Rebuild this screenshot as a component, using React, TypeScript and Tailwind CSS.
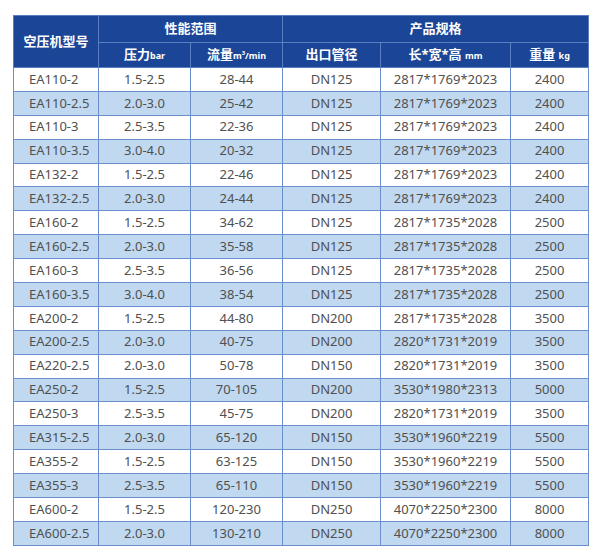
const rows = [
["EA110-2","1.5-2.5","28-44","DN125","2817*1769*2023","2400"],
["EA110-2.5","2.0-3.0","25-42","DN125","2817*1769*2023","2400"],
["EA110-3","2.5-3.5","22-36","DN125","2817*1769*2023","2400"],
["EA110-3.5","3.0-4.0","20-32","DN125","2817*1769*2023","2400"],
["EA132-2","1.5-2.5","22-46","DN125","2817*1769*2023","2400"],
["EA132-2.5","2.0-3.0","24-44","DN125","2817*1769*2023","2400"],
["EA160-2","1.5-2.5","34-62","DN125","2817*1735*2028","2500"],
["EA160-2.5","2.0-3.0","35-58","DN125","2817*1735*2028","2500"],
["EA160-3","2.5-3.5","36-56","DN125","2817*1735*2028","2500"],
["EA160-3.5","3.0-4.0","38-54","DN125","2817*1735*2028","2500"],
["EA200-2","1.5-2.5","44-80","DN200","2817*1735*2028","3500"],
["EA200-2.5","2.0-3.0","40-75","DN200","2820*1731*2019","3500"],
["EA220-2.5","2.0-3.0","50-78","DN150","2820*1731*2019","3500"],
["EA250-2","1.5-2.5","70-105","DN200","3530*1980*2313","5000"],
["EA250-3","2.5-3.5","45-75","DN200","2820*1731*2019","3500"],
["EA315-2.5","2.0-3.0","65-120","DN150","3530*1960*2219","5500"],
["EA355-2","1.5-2.5","63-125","DN150","3530*1960*2219","5500"],
["EA355-3","2.5-3.5","65-110","DN150","3530*1960*2219","5500"],
["EA600-2","1.5-2.5","120-230","DN250","4070*2250*2300","8000"],
["EA600-2.5","2.0-3.0","130-210","DN250","4070*2250*2300","8000"],
];
const th = "border border-[#5a7fc0] font-bold text-white text-[13px] text-center";
const td = "border border-[#6b8fcc] text-[13px] text-[#505050] text-center h-[23.9px] p-0";
export default function App() {
  return (
    <div className="w-[600px] h-[558px] bg-white pt-[15px] pl-[13px]" style={{fontFamily:'"Noto Sans","Noto Sans CJK SC",sans-serif'}}>
      <table className="border-collapse table-fixed w-[575px]">
        <colgroup>
          <col className="w-[85px]"/><col className="w-[92px]"/><col className="w-[92px]"/><col className="w-[98px]"/><col className="w-[130px]"/><col className="w-[78px]"/>
        </colgroup>
        <thead className="bg-[#1b4596]">
          <tr className="h-[27px]">
            <th rowSpan={2} className={th}>空压机型号</th>
            <th colSpan={2} className={th}>性能范围</th>
            <th colSpan={3} className={th}>产品规格</th>
          </tr>
          <tr className="h-[25px]">
            <th className={th}>压力<span className="text-[9px]">bar</span></th>
            <th className={th}>流量<span className="text-[9px]">m³/min</span></th>
            <th className={th}>出口管径</th>
            <th className={th}>长*宽*高 <span className="text-[9px]">mm</span></th>
            <th className={th}>重量 <span className="text-[9px]">kg</span></th>
          </tr>
        </thead>
        <tbody>
          {rows.map((r,i)=>(
            <tr key={i} className={i%2 ? "bg-[#c0d9f1]" : "bg-white"}>
              {r.map((c,j)=>(<td key={j} className={td + (j===0 ? " text-left pl-[15px]" : "")}>{c}</td>))}
            </tr>
          ))}
        </tbody>
      </table>
    </div>
  );
}
